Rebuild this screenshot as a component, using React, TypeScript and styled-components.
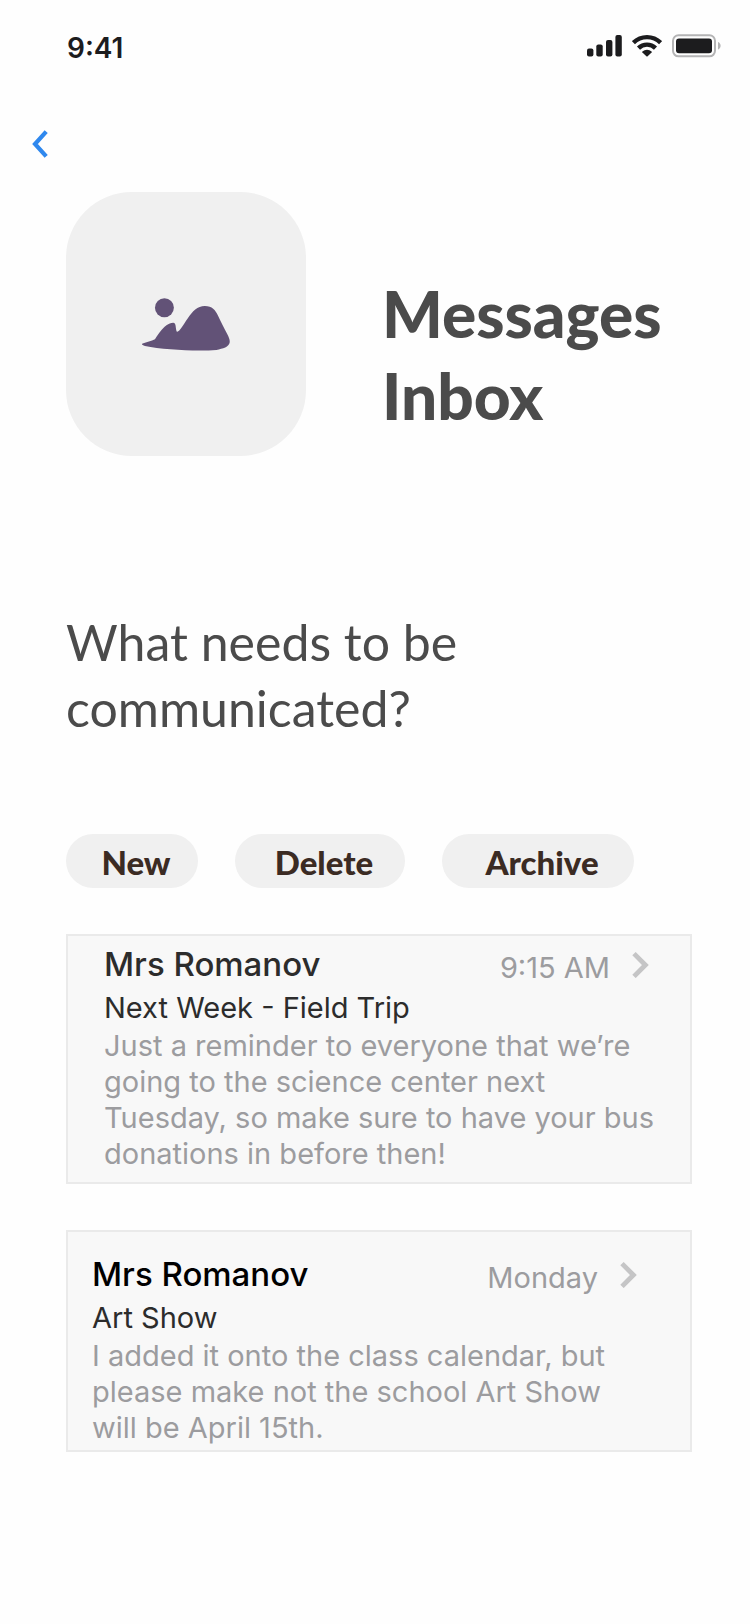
import React from "react";
import styled, { createGlobalStyle } from "styled-components";

const display = `"Avenir Next", Avenir, Lato, sans-serif`;
const system = `Inter, "Liberation Sans", sans-serif`;

const GlobalStyle = createGlobalStyle`
  *, *::before, *::after { box-sizing: border-box; }
  body { margin: 0; background: #fefefe; font-family: ${system}; }
  h1, h2, h3, p { margin: 0; font-weight: 400; }
`;

const Screen = styled.div`
  min-height: 100vh;
  padding-bottom: 64px;
`;

const StatusBar = styled.div`
  display: flex;
  align-items: center;
  justify-content: space-between;
  height: 92px;
  padding: 0 29px 0 67px;
`;

const Clock = styled.time`
  padding-top: 3px;
  color: #1c1c1e;
  font-size: 28px;
  font-weight: 600;
  line-height: 36px;
`;

const StatusIcons = styled.div`
  display: flex;
  align-items: center;
  gap: 10px;
`;

const NavBar = styled.nav`
  display: flex;
  align-items: center;
  height: 100px;
  padding: 4px 24px 0;
`;

const BackButton = styled.button`
  display: flex;
  align-items: center;
  justify-content: center;
  width: 32px;
  height: 48px;
  padding: 0;
  border: 0;
  background: none;
  cursor: pointer;
`;

const Content = styled.main`
  padding: 0 58px 0 66px;
`;

const Hero = styled.header`
  display: flex;
  align-items: flex-start;
  gap: 76px;
`;

const Cover = styled.div`
  display: flex;
  flex: none;
  align-items: center;
  justify-content: center;
  width: 240px;
  height: 264px;
  border-radius: 66px;
  background: #f0f0f0;
`;

const Title = styled.h1`
  padding-top: 81px;
  color: #4b4b4b;
  font-family: ${display};
  font-size: 64px;
  font-weight: 900;
  line-height: 82px;
`;

const Question = styled.h2`
  margin-top: 153px;
  color: #4b4b4b;
  font-family: ${display};
  font-size: 50px;
  line-height: 66px;
`;

const Actions = styled.div`
  display: flex;
  gap: 37px;
  margin-top: 93px;
`;

const Pill = styled.button<{ $width: number }>`
  width: ${(p) => p.$width}px;
  height: 54px;
  padding: 2px 0 0 8px;
  border: 0;
  border-radius: 27px;
  background: #f0f0f0;
  color: #3b2b23;
  font-family: ${display};
  font-size: 33px;
  font-weight: 900;
  line-height: 40px;
  cursor: pointer;
`;

const Messages = styled.div`
  display: flex;
  flex-direction: column;
  gap: 46px;
  margin-top: 46px;
`;

const Card = styled.a<{ $padding: string }>`
  display: block;
  padding: ${(p) => p.$padding};
  border: 2px solid #eaeaea;
  background: #f8f8f8;
  color: #2c2c2c;
  text-decoration: none;
`;

const CardHead = styled.div`
  display: flex;
  align-items: center;
  height: 48px;
  padding-right: 10px;
`;

const Sender = styled.h3<{ $color: string }>`
  flex: 1;
  color: ${(p) => p.$color};
  font-size: 33px;
  font-weight: 500;
  line-height: 48px;
`;

const Time = styled.time`
  padding-top: 7px;
  margin-right: 22px;
  color: #9c9c9f;
  font-size: 29px;
  line-height: 36px;
`;

const Subject = styled.p`
  font-size: 29px;
  line-height: 40px;
`;

const Preview = styled.p`
  color: #9c9c9f;
  font-size: 29px;
  line-height: 36px;
`;

const Signal = () => (
  <svg width="35" height="24" viewBox="0 0 35 24" fill="#1c1c1e" aria-hidden="true">
    <rect x="0" y="14.5" width="6.4" height="8" rx="2" />
    <rect x="9.3" y="10.5" width="6.4" height="12" rx="2" />
    <rect x="19" y="6" width="6.4" height="16.5" rx="2" />
    <rect x="28.4" y="1" width="6.4" height="21.5" rx="2" />
  </svg>
);

const Wifi = () => (
  <svg width="30" height="24" viewBox="0 0 30 24" aria-hidden="true">
    <g fill="none" stroke="#1c1c1e" strokeWidth="4.4">
      <path d="M1.4 8.7A19.4 19.4 0 0 1 28.6 8.7" />
      <path d="M6.5 14.1A12.2 12.2 0 0 1 23.5 14.1" />
    </g>
    <path d="M10.4 17.5A7 7 0 0 1 19.6 17.5Q20 18 19.6 18.4L15.6 22.2Q15 22.7 14.4 22.2L10.4 18.4Q10 18 10.4 17.5Z" fill="#1c1c1e" />
  </svg>
);

const Battery = () => (
  <svg width="49" height="24" viewBox="0 0 49 24" aria-hidden="true">
    <rect x="1" y="1.3" width="42" height="21" rx="5.5" fill="none" stroke="#b4b4b5" strokeWidth="2" />
    <rect x="4" y="4.4" width="36" height="14.8" rx="3" fill="#1c1c1e" />
    <path d="M46 8V15.6C47.6 15 48.6 13.5 48.6 11.8S47.6 8.6 46 8Z" fill="#b4b4b5" />
  </svg>
);

const Landscape = () => (
  <svg width="88" height="53" viewBox="276 352 265 159" fill="#625277" role="img" aria-label="Landscape">
    <circle cx="343.5" cy="381" r="28.5" />
    <path d="M278 489C290 484 304 481 315 476C322 464 332 449 344 438C353 430 363 426 370 426C380 427 376 443 381 453C388 456 400 433 414 413C428 392 443 376 465 376C488 376 496 388 505 405C513 422 524 443 533 461C538 471 541 478 540 486C538 499 520 505 500 508C440 513 340 507 285 496C276 494 274 491 278 489Z" />
  </svg>
);

const BackIcon = () => (
  <svg width="16" height="28" viewBox="0 0 16 28" fill="none" stroke="#2f88ee" strokeWidth="4.2" aria-hidden="true">
    <path d="M14.2 1.6L3 14L14.2 26.4" />
  </svg>
);

const Chevron = () => (
  <svg width="17" height="28" viewBox="0 0 17 28" fill="none" stroke="#c5c5c6" strokeWidth="4.8" aria-hidden="true">
    <path d="M2 3.6L13.4 15L2 26.4" />
  </svg>
);

const actions = [
  { label: "New", width: 132 },
  { label: "Delete", width: 170 },
  { label: "Archive", width: 192 },
];

const messages = [
  {
    sender: "Mrs Romanov",
    senderColor: "#2c2c2c",
    time: "9:15 AM",
    subject: "Next Week - Field Trip",
    preview:
      "Just a reminder to everyone that we’re going to the science center next Tuesday, so make sure to have your bus donations in before then!",
    padding: "4px 31px 10px 36px",
  },
  {
    sender: "Mrs Romanov",
    senderColor: "#000000",
    time: "Monday",
    subject: "Art Show",
    preview:
      "I added it onto the class calendar, but please make not the school Art Show will be April 15th.",
    padding: "18px 43px 4px 24px",
  },
];

export default function App() {
  return (
    <>
      <GlobalStyle />
      <Screen>
        <StatusBar>
          <Clock>9:41</Clock>
          <StatusIcons>
            <Signal />
            <Wifi />
            <Battery />
          </StatusIcons>
        </StatusBar>
        <NavBar>
          <BackButton type="button" aria-label="Back">
            <BackIcon />
          </BackButton>
        </NavBar>
        <Content>
          <Hero>
            <Cover>
              <Landscape />
            </Cover>
            <Title>
              Messages
              <br />
              Inbox
            </Title>
          </Hero>
          <Question>
            What needs to be
            <br />
            communicated?
          </Question>
          <Actions>
            {actions.map((a) => (
              <Pill key={a.label} type="button" $width={a.width}>
                {a.label}
              </Pill>
            ))}
          </Actions>
          <Messages>
            {messages.map((m) => (
              <Card key={m.subject} href="#" $padding={m.padding}>
                <CardHead>
                  <Sender $color={m.senderColor}>{m.sender}</Sender>
                  <Time>{m.time}</Time>
                  <Chevron />
                </CardHead>
                <Subject>{m.subject}</Subject>
                <Preview>{m.preview}</Preview>
              </Card>
            ))}
          </Messages>
        </Content>
      </Screen>
    </>
  );
}
